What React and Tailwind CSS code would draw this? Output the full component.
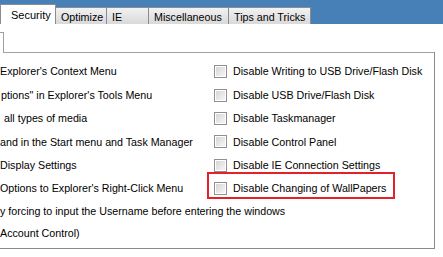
import React from 'react'

const tabs = [
  { label: 'Security', w: 'w-[56px]', active: true },
  { label: 'Optimize', w: 'w-[51px]' },
  { label: 'IE', w: 'w-[42px]' },
  { label: 'Miscellaneous', w: 'w-[80px]' },
  { label: 'Tips and Tricks', w: 'w-[82px]' },
]

const rows = [
  { left: "Explorer's Context Menu", right: 'Disable Writing to USB Drive/Flash Disk' },
  { left: 'ptions" in Explorer\'s Tools Menu', right: 'Disable USB Drive/Flash Disk', indent: 'ml-[1px]' },
  { left: 'all types of media', right: 'Disable Taskmanager', indent: 'ml-[4px]' },
  { left: 'and in the Start menu and Task Manager', right: 'Disable Control Panel' },
  { left: 'Display Settings', right: 'Disable IE Connection Settings' },
  { left: "Options to Explorer's Right-Click Menu", right: 'Disable Changing of WallPapers', marked: true },
  { left: 'y forcing to input the Username before entering the windows' },
  { left: 'Account Control)' },
]

function Checkbox() {
  return (
    <span className="block w-[13px] h-[13px] border border-[#8e8f8f] p-px bg-white shrink-0">
      <span className="block w-full h-full bg-linear-to-br from-[#d6d6d6] to-[#f6f6f6]" />
    </span>
  )
}

export default function App() {
  return (
    <div className="w-[443px] h-[257px] overflow-hidden bg-white text-black text-[10.7px] leading-none font-['Liberation_Sans',Arial,sans-serif]">
      {/* tab strip */}
      <div className="h-[24px] bg-[#4680b6] flex items-end">
        {tabs.map((t) => (
          <div
            key={t.label}
            className={
              t.active
                ? `${t.w} h-[20px] bg-white border border-b-0 border-[#898c95] pl-[10px] pt-[5px] text-[11px]`
                : `${t.w} h-[17px] bg-linear-to-b from-[#f2f2f2] to-[#d9d9d9] border border-b-0 border-l-0 border-[#898c95] pl-[5px] pt-[4px]`
            }
          >
            {t.label}
          </div>
        ))}
      </div>

      {/* page */}
      <div className="pt-[8px]">
        <div className="w-[4px] h-[20px] border-t border-r border-[#a0a0a0]" />
        <div className="w-[435px] h-[197px] border-r border-b border-[#8a8a8e]">
          <div className="ml-[3px] h-px bg-[#a0a0a0]" />
          <div className="pt-[7px]">
            {rows.map((r, i) => (
              <div
                key={i}
                className={`${r.right ? 'h-[23.4px]' : 'h-[22px]'} flex items-center whitespace-nowrap`}
              >
                {r.right ? (
                  <>
                    <div className="w-[214px] shrink-0">
                      <span className={r.indent}>{r.left}</span>
                    </div>
                    <div className="relative flex items-center gap-[6px]">
                      <Checkbox />
                      <span>{r.right}</span>
                      {r.marked && (
                        <div className="absolute -left-[7px] -top-[10px] w-[188px] h-[27px] border-2 border-[#e5202a]" />
                      )}
                    </div>
                  </>
                ) : (
                  <span>{r.left}</span>
                )}
              </div>
            ))}
          </div>
        </div>
      </div>
    </div>
  )
}
